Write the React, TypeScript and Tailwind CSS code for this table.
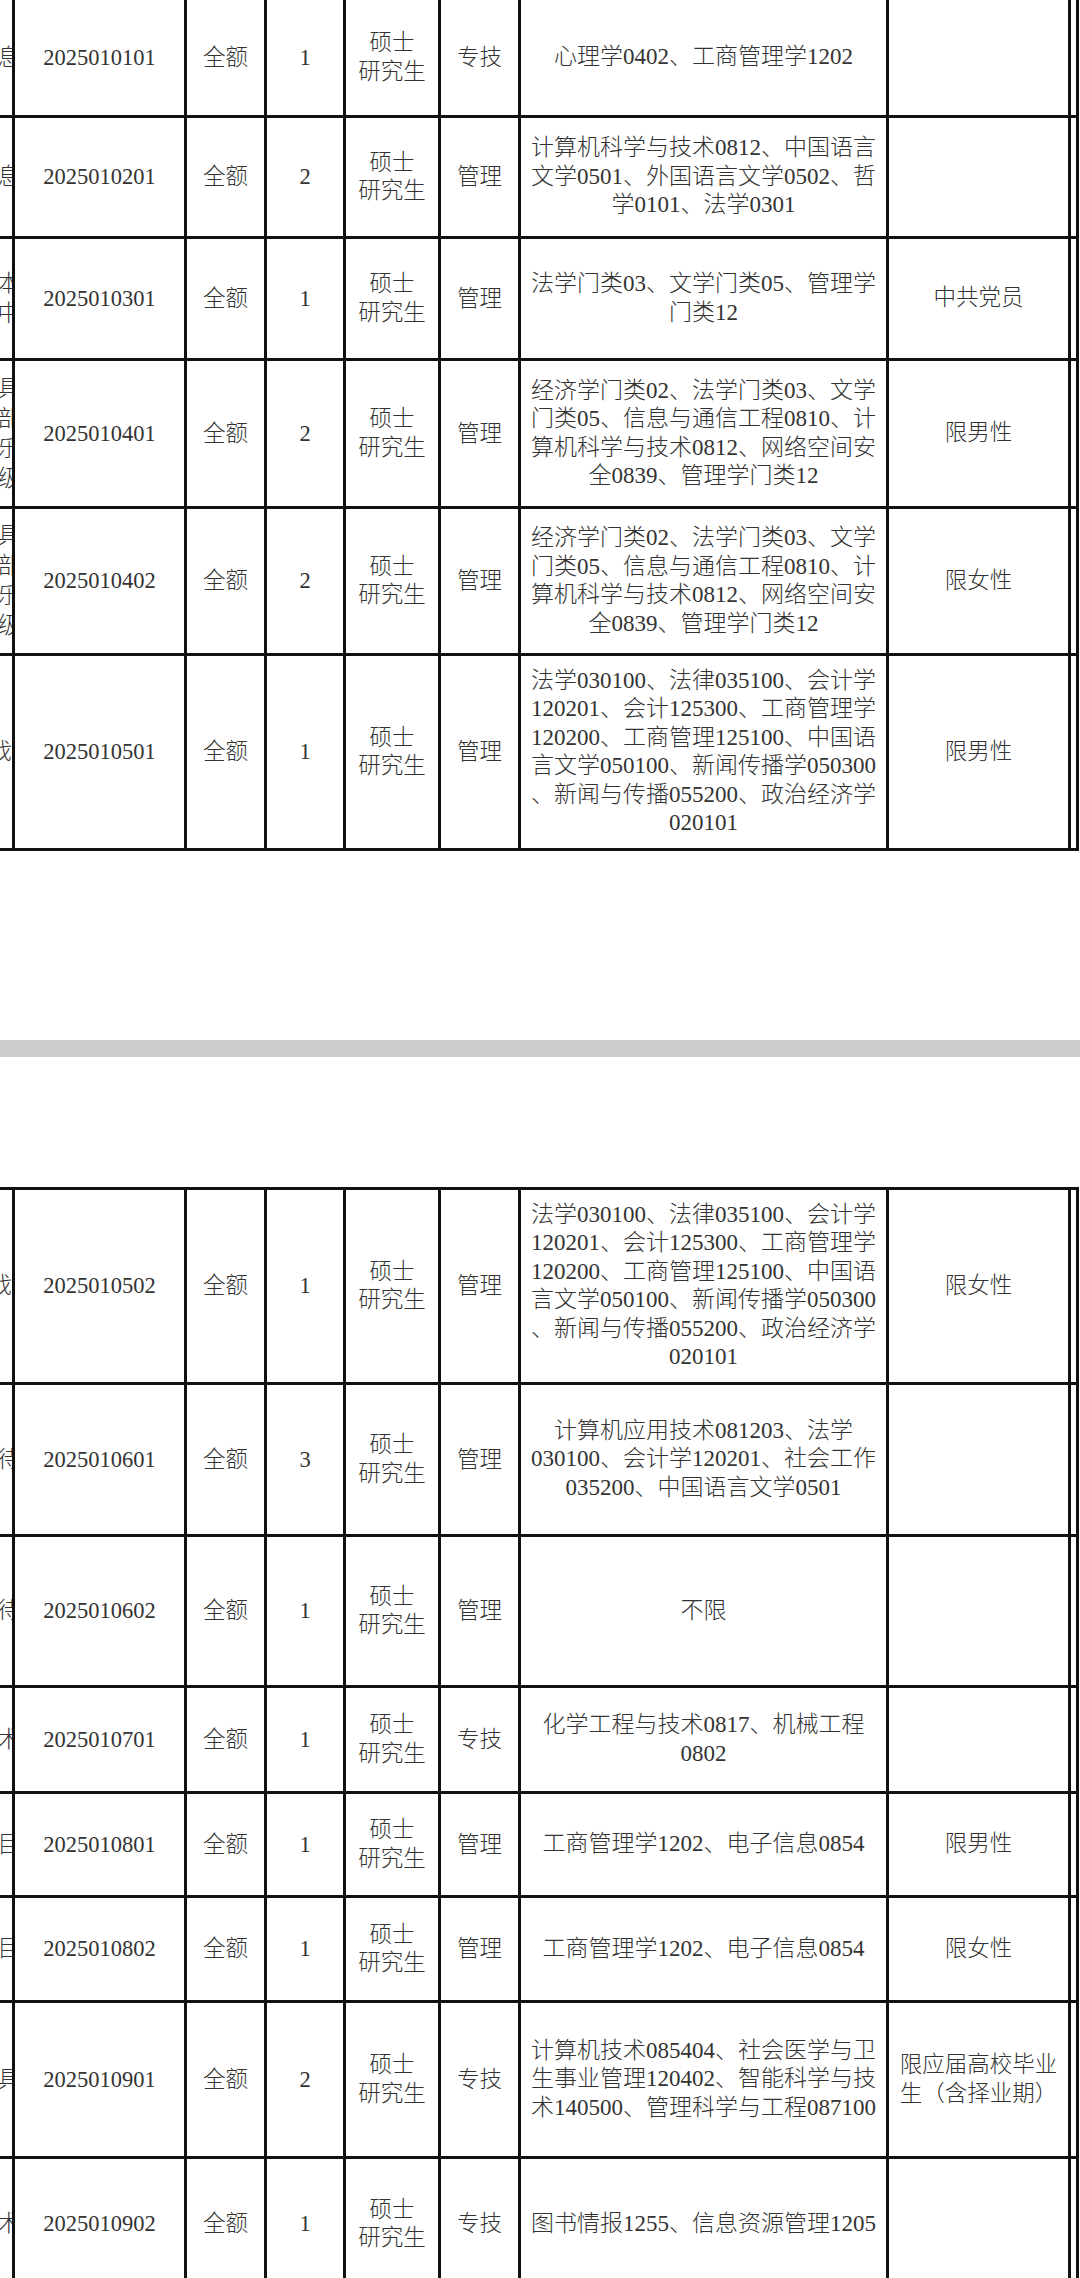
type Row = {
  edge: string[];
  code: string;
  count: string;
  kind: "专技" | "管理";
  major: string[];
  note?: string[];
};

const LAW_JOURNALISM = [
  "法学030100、法律035100、会计学",
  "120201、会计125300、工商管理学",
  "120200、工商管理125100、中国语",
  "言文学050100、新闻传播学050300",
  "、新闻与传播055200、政治经济学",
  "020101",
];

const ECON_LAW = [
  "经济学门类02、法学门类03、文学",
  "门类05、信息与通信工程0810、计",
  "算机科学与技术0812、网络空间安",
  "全0839、管理学门类12",
];

const TOP_ROWS: Row[] = [
  { edge: ["息"], code: "2025010101", count: "1", kind: "专技", major: ["心理学0402、工商管理学1202"] },
  {
    edge: ["息"],
    code: "2025010201",
    count: "2",
    kind: "管理",
    major: ["计算机科学与技术0812、中国语言", "文学0501、外国语言文学0502、哲", "学0101、法学0301"],
  },
  {
    edge: ["本", "中"],
    code: "2025010301",
    count: "1",
    kind: "管理",
    major: ["法学门类03、文学门类05、管理学", "门类12"],
    note: ["中共党员"],
  },
  { edge: ["具", "部", "乐", "级"], code: "2025010401", count: "2", kind: "管理", major: ECON_LAW, note: ["限男性"] },
  { edge: ["具", "部", "乐", "级"], code: "2025010402", count: "2", kind: "管理", major: ECON_LAW, note: ["限女性"] },
  { edge: ["划"], code: "2025010501", count: "1", kind: "管理", major: LAW_JOURNALISM, note: ["限男性"] },
];

const BOTTOM_ROWS: Row[] = [
  { edge: ["划"], code: "2025010502", count: "1", kind: "管理", major: LAW_JOURNALISM, note: ["限女性"] },
  {
    edge: ["待"],
    code: "2025010601",
    count: "3",
    kind: "管理",
    major: ["计算机应用技术081203、法学", "030100、会计学120201、社会工作", "035200、中国语言文学0501"],
  },
  { edge: ["待"], code: "2025010602", count: "1", kind: "管理", major: ["不限"] },
  { edge: ["术"], code: "2025010701", count: "1", kind: "专技", major: ["化学工程与技术0817、机械工程", "0802"] },
  { edge: ["目"], code: "2025010801", count: "1", kind: "管理", major: ["工商管理学1202、电子信息0854"], note: ["限男性"] },
  { edge: ["目"], code: "2025010802", count: "1", kind: "管理", major: ["工商管理学1202、电子信息0854"], note: ["限女性"] },
  {
    edge: ["具"],
    code: "2025010901",
    count: "2",
    kind: "专技",
    major: ["计算机技术085404、社会医学与卫", "生事业管理120402、智能科学与技", "术140500、管理科学与工程087100"],
    note: ["限应届高校毕业", "生（含择业期）"],
  },
  { edge: ["术"], code: "2025010902", count: "1", kind: "专技", major: ["图书情报1255、信息资源管理1205"] },
];

function Lines({ lines }: { lines: string[] }) {
  return (
    <div className="flex flex-col items-center leading-[28.5px]">
      {lines.map((l, i) => (
        <span key={i} className="whitespace-nowrap">
          {l}
        </span>
      ))}
    </div>
  );
}

function Cell({ children, className = "" }: { children?: React.ReactNode; className?: string }) {
  return <div className={"flex items-center justify-center bg-white text-center " + className}>{children}</div>;
}

// the first column is cut by the page edge, only the right side of its glyphs shows
function TableRow({ row }: { row: Row }) {
  return (
    <>
      <div className="flex items-center justify-end overflow-hidden bg-white">
        <div className="mr-[-8px] flex shrink-0 flex-col leading-[30px]">
          {row.edge.map((c, i) => (
            <span key={i}>{c}</span>
          ))}
        </div>
      </div>
      <Cell>{row.code}</Cell>
      <Cell>全额</Cell>
      <Cell>{row.count}</Cell>
      <Cell>
        <Lines lines={["硕士", "研究生"]} />
      </Cell>
      <Cell>{row.kind}</Cell>
      <Cell className="text-[23px]">
        <Lines lines={row.major} />
      </Cell>
      <Cell>{row.note && <Lines lines={row.note} />}</Cell>
      <Cell />
    </>
  );
}

function Sheet({ rows, rowsClass, top }: { rows: Row[]; rowsClass: string; top?: boolean }) {
  return (
    <div
      className={
        "grid w-[1079px] grid-cols-[12px_169px_77px_76px_92px_77px_365px_179px_5px] gap-[3px] bg-[#111] pr-[3px] pb-[3px] " +
        rowsClass +
        (top ? " pt-[3px]" : "")
      }
    >
      {rows.map((r) => (
        <TableRow key={r.code} row={r} />
      ))}
    </div>
  );
}

export default function App() {
  return (
    <div className="h-[2278px] w-[1080px] overflow-hidden bg-white font-['Liberation_Serif','Noto_Sans_CJK_SC',serif] text-[22.5px] font-light text-[#333]">
      <Sheet rows={TOP_ROWS} rowsClass="grid-rows-[115px_118px_119px_145px_144px_192px]" />
      <div className="mt-[189px] h-[17px] bg-[#cccccc]" />
      <div className="mt-[130px]">
        <Sheet
          rows={BOTTOM_ROWS}
          rowsClass="grid-rows-[192px_149px_148px_103px_101px_102px_153px_130px]"
          top
        />
      </div>
    </div>
  );
}
